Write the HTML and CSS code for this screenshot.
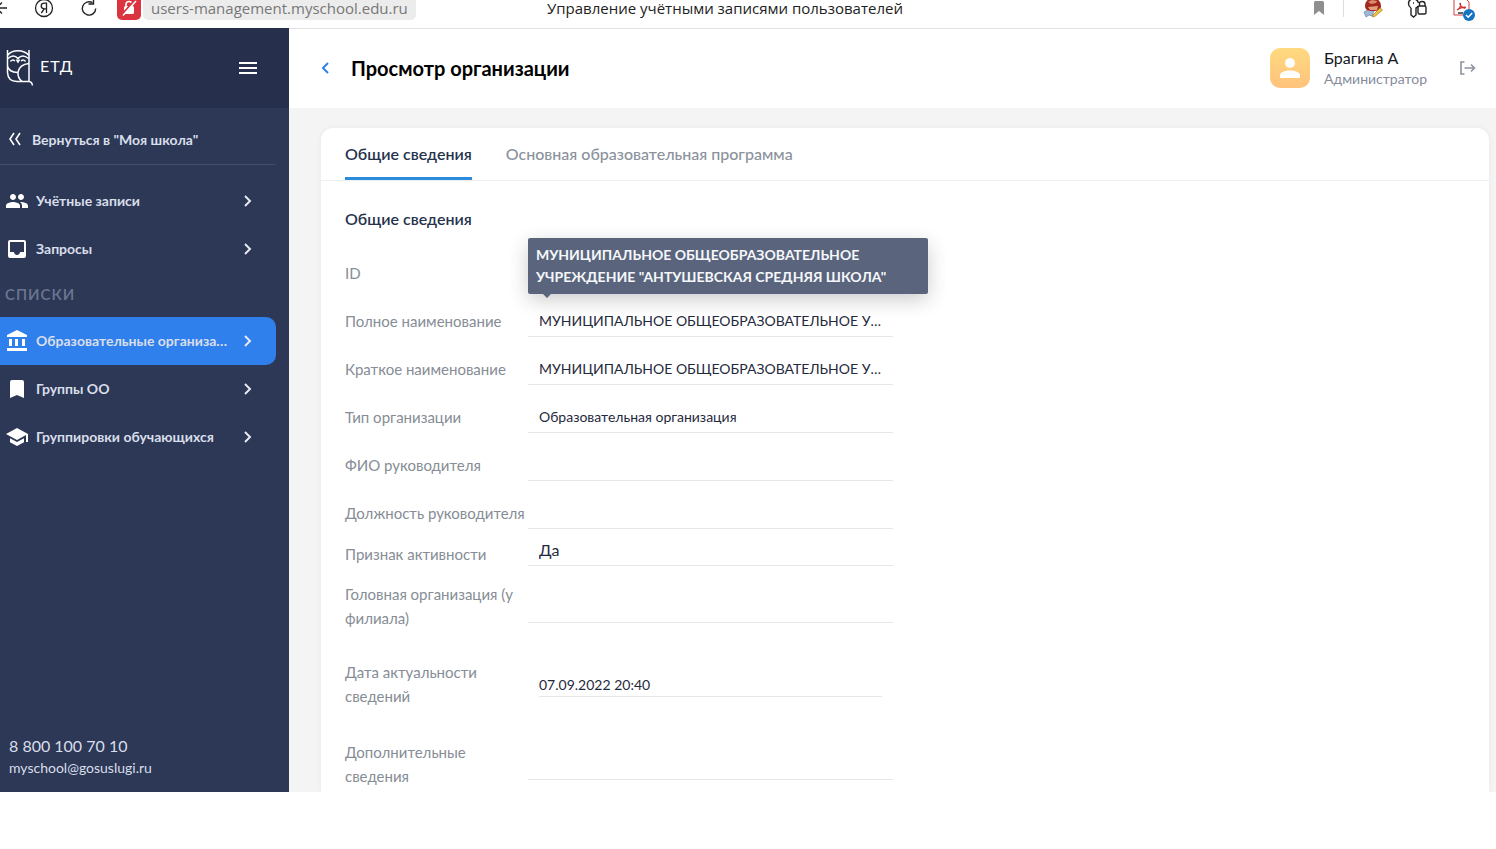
FILE: index.html
```html
<!DOCTYPE html>
<html lang="ru">
<head>
<meta charset="utf-8">
<title>Управление учётными записями пользователей</title>
<link rel="stylesheet" href="styles.css">
</head>
<body>
<div class="window">
  <div class="browser-bar">
    <div class="browser-nav">
      <button class="icon-btn nav-back" type="button" aria-label="Назад"><svg width="18" height="18" viewBox="0 0 18 18" fill="none" stroke="#222" stroke-width="1.3"><path d="M6 9h11M12 3.500L6.500 9l5.500 5.500"/></svg></button>
      <button class="icon-btn" type="button" aria-label="Яндекс"><svg width="20" height="20" viewBox="0 0 20 20" fill="none" stroke="#222" stroke-width="1.3"><circle cx="10" cy="10" r="8.500"/><path d="M12.500 15V5.200h-2c-2 0-3.300 1.100-3.300 2.800 0 1.800 1.300 2.800 3.300 2.800h2M10.300 10.800L7.300 15"/></svg></button>
      <button class="icon-btn" type="button" aria-label="Обновить"><svg width="18" height="18" viewBox="0 0 18 18" fill="none" stroke="#222" stroke-width="1.400"><path d="M15.700 9.500A6.700 6.700 0 1 1 12.500 3.700"/><path d="M13.500 0v5h-5"/></svg></button>
    </div>
    <div class="address">
      <button class="lock" type="button" aria-label="Незащищённое соединение"><svg width="24" height="24" viewBox="0 0 24 24"><path d="M9 11V8.500a3 3 0 0 1 6 0V11" fill="none" stroke="#fff" stroke-width="1.600"/><rect x="7" y="10" width="10" height="8" rx="1.500" fill="#fff"/><path d="M5 18.500L18 4" stroke="#dc3340" stroke-width="2"/><path d="M6 19.500L19 5" stroke="#fff" stroke-width="1.500"/></svg></button>
      <span class="url">users-management.myschool.edu.ru</span>
    </div>
    <div class="page-title">Управление учётными записями пользователей</div>
    <div class="extensions">
      <svg width="12" height="16" viewBox="0 0 12 16"><path d="M1 2.500Q1 1 2.500 1h7Q11 1 11 2.500V15l-5-4-5 4z" fill="#8f8f8f"/></svg>
      <span class="bar-divider"></span>
      <svg width="22" height="22" viewBox="0 0 22 22"><path d="M2 15l5-3 5 2-2 5-3-1-3 2z" fill="#9fb8d8" stroke="#6482a8" stroke-width=".7"/><path d="M3 9a8 8 0 0 1 16 0c0 4-3 5-8 5S3 13 3 9z" fill="#a3281d"/><path d="M6 5l4-2 5 1-1 2-5 1z" fill="#d98c70"/><path d="M6 10l10-1-1 4H8z" fill="#e3a080"/><path d="M11 18l7-7 2.500 2-7 6-3 1z" fill="#f0c63c" stroke="#a5782b" stroke-width=".7"/></svg>
      <svg width="22" height="22" viewBox="0 0 22 22" fill="none" stroke="#222" stroke-width="1.400"><path d="M5 11Q2.500 9.500 2.500 6.500 2.500 2 7.500 2q4 0 5 4M5 11v7l2.500 2 2.500-2v-7q1.500-.5 2-2M7 6h1"/><rect x="12" y="9" width="8" height="8" rx="1.500"/><path d="M13.500 9V6.500q0-2 2.500-2 3 0 3 2.500v2"/></svg>
      <svg width="26" height="26" viewBox="0 0 26 26"><path d="M4 3h11l4 4v13H4z" fill="#fff" stroke="#cf3f3f" stroke-width="1"/><path d="M7 15c3-2 4-4 3.500-6-.3-1.500-1.500 0 .5 2 1.500 2 4 2.500 4.500 1.700.5-1.200-5-.3-8.500 2.300z" fill="none" stroke="#cf3030" stroke-width="1.200"/><path d="M8 18h5" stroke="#333" stroke-width="1.500"/><circle cx="19" cy="20" r="6" fill="#1473c2"/><path d="M16 20l2.200 2.200 4-4.200" fill="none" stroke="#fff" stroke-width="1.600"/></svg>
    </div>
  </div>

  <div class="app">
    <aside class="sidebar">
      <div class="sidebar-head">
        <a class="logo" href="#" aria-label="ЕТД">
          <svg width="30" height="38" viewBox="0 0 30 38" fill="none" stroke="#fff" stroke-width="1.500">
            <path d="M2.500 1v22.500Q3 32.500 12 32.500H24q3 .2 3.500 4M24 1v31.500M2.500 6.500Q6 1.700 13 1.700T24 6.500"/>
            <path d="M3 9.500Q8.500 4.500 13 9.500 17.500 4.500 23.500 9.500M5.500 12.500q1.500-2.500 4.500-.5M16 12q3-2 4.500.5M11.500 10.500l1.500 2.500 1.500-2.500"/>
            <path d="M24 14.500Q14.500 15.500 13 23q-.5 6 4 9.500M2.500 17.500Q4 23 12.500 23.500"/>
          </svg>
          <span class="logo-text">ЕТД</span>
        </a>
        <button class="icon-btn burger" type="button" aria-label="Меню"><svg width="18" height="12" viewBox="0 0 18 12"><path d="M0 0h18v2H0zM0 5h18v2H0zM0 10h18v2H0z" fill="#fff"/></svg></button>
      </div>
      <a class="return-link" href="#"><svg width="14" height="14" viewBox="0 0 14 14" fill="none" stroke="#fff" stroke-width="1.600"><path d="M6 1L2 7l4 6M12 1L8 7l4 6"/></svg>Вернуться в "Моя школа"</a>
      <nav class="menu">
        <a class="menu-item" href="#"><svg class="menu-icon" width="24" height="24" viewBox="0 0 24 24"><path d="M16 11c1.660 0 2.990-1.340 2.990-3S17.660 5 16 5s-3 1.340-3 3 1.340 3 3 3zm-8 0c1.660 0 2.990-1.340 2.990-3S9.660 5 8 5 5 6.340 5 8s1.340 3 3 3zm0 2c-2.330 0-7 1.170-7 3.500V19h14v-2.500C15 14.170 10.330 13 8 13zm8 0c-.29 0-.62.020-.97.050 1.160.84 1.970 1.970 1.970 3.450V19h6v-2.500c0-2.330-4.670-3.500-7-3.500z"/></svg><span class="menu-label">Учётные записи</span><svg class="chevron" width="8" height="12" viewBox="0 0 8 12"><path d="M1 1l5 5-5 5"/></svg></a>
        <a class="menu-item" href="#"><svg class="menu-icon" width="24" height="24" viewBox="0 0 24 24"><path d="M19 3H5a2 2 0 0 0-2 2v14a2 2 0 0 0 2 2h14a2 2 0 0 0 2-2V5a2 2 0 0 0-2-2zm0 12h-4c0 1.660-1.350 3-3 3s-3-1.340-3-3H5V5h14z"/></svg><span class="menu-label">Запросы</span><svg class="chevron" width="8" height="12" viewBox="0 0 8 12"><path d="M1 1l5 5-5 5"/></svg></a>
        <div class="menu-group">СПИСКИ</div>
        <a class="menu-item active" href="#"><svg class="menu-icon" width="24" height="24" viewBox="0 0 24 24"><path d="M4 10v7h3v-7zm6 0v7h3v-7zM2 22h20v-3H2zm15-12v7h3v-7zM12 1L2 6v2h20V6z"/></svg><span class="menu-label">Образовательные организации</span><svg class="chevron" width="8" height="12" viewBox="0 0 8 12"><path d="M1 1l5 5-5 5"/></svg></a>
        <a class="menu-item" href="#"><svg class="menu-icon" width="24" height="24" viewBox="0 0 24 24"><path d="M17 3H7a2 2 0 0 0-2 2v16l7-3 7 3V5a2 2 0 0 0-2-2z"/></svg><span class="menu-label">Группы ОО</span><svg class="chevron" width="8" height="12" viewBox="0 0 8 12"><path d="M1 1l5 5-5 5"/></svg></a>
        <a class="menu-item" href="#"><svg class="menu-icon" width="24" height="24" viewBox="0 0 24 24"><path d="M5 13.180v4L12 21l7-3.820v-4L12 17zM12 3L1 9l11 6 9-4.910V17h2V9z"/></svg><span class="menu-label">Группировки обучающихся</span><svg class="chevron" width="8" height="12" viewBox="0 0 8 12"><path d="M1 1l5 5-5 5"/></svg></a>
      </nav>
      <footer class="contacts">
        <a class="phone" href="#">8 800 100 70 10</a>
        <a class="email" href="#">myschool@gosuslugi.ru</a>
      </footer>
    </aside>

    <div class="content">
      <header class="topbar">
        <button class="icon-btn back" type="button" aria-label="Назад"><svg width="8" height="12" viewBox="0 0 8 12" fill="none" stroke="#2f7fed" stroke-width="2"><path d="M7 1L2 6l5 5"/></svg></button>
        <h1 class="title">Просмотр организации</h1>
        <div class="avatar"><svg width="20" height="20" viewBox="0 0 20 20" fill="#fff"><circle cx="10" cy="5" r="5"/><path d="M0 20v-2.500C0 14 5 12.500 10 12.500S20 14 20 17.500V20z"/></svg></div>
        <div class="user"><span class="user-name">Брагина А</span><span class="user-role">Администратор</span></div>
        <button class="icon-btn logout" type="button" aria-label="Выйти"><svg width="16" height="14" viewBox="0 0 16 14" fill="none" stroke="#8b929f" stroke-width="1.600"><path d="M4.500 1H1v12h3.500M4.500 7h10M11 3.500L14.500 7 11 10.500"/></svg></button>
      </header>
      <main class="card">
        <div class="tabs" role="tablist">
          <button class="tab selected" type="button" role="tab" aria-selected="true">Общие сведения</button>
          <button class="tab" type="button" role="tab" aria-selected="false">Основная образовательная программа</button>
        </div>
        <form class="form">
          <h2 class="section">Общие сведения</h2>
          <div class="row"><span class="label">ID</span></div>
          <div class="row"><label class="label" for="full">Полное наименование</label><div class="field"><input id="full" class="value" readonly value="МУНИЦИПАЛЬНОЕ ОБЩЕОБРАЗОВАТЕЛЬНОЕ УЧРЕЖДЕНИЕ"><div class="tooltip" role="tooltip">МУНИЦИПАЛЬНОЕ ОБЩЕОБРАЗОВАТЕЛЬНОЕ УЧРЕЖДЕНИЕ "АНТУШЕВСКАЯ СРЕДНЯЯ ШКОЛА"</div></div></div>
          <div class="row"><label class="label" for="short">Краткое наименование</label><div class="field"><input id="short" class="value" readonly value="МУНИЦИПАЛЬНОЕ ОБЩЕОБРАЗОВАТЕЛЬНОЕ УЧРЕЖДЕНИЕ"></div></div>
          <div class="row"><label class="label" for="type">Тип организации</label><div class="field"><input id="type" class="value" readonly value="Образовательная организация"></div></div>
          <div class="row"><label class="label" for="head">ФИО руководителя</label><div class="field"><input id="head" class="value" readonly></div></div>
          <div class="row"><label class="label" for="post">Должность руководителя</label><div class="field"><input id="post" class="value" readonly></div></div>
          <div class="row row-active"><label class="label" for="active">Признак активности</label><div class="field"><input id="active" class="value" readonly value="Да"></div></div>
          <div class="row row-parent"><label class="label" for="parent">Головная организация (у филиала)</label><div class="field"><input id="parent" class="value" readonly></div></div>
          <div class="row row-date"><label class="label" for="date">Дата актуальности сведений</label><div class="field"><input id="date" class="value" readonly value="07.09.2022 20:40"></div></div>
          <div class="row row-extra"><label class="label" for="extra">Дополнительные сведения</label><div class="field"><input id="extra" class="value" readonly></div></div>
        </form>
      </main>
    </div>
  </div>
</div>
</body>
</html>
```
FILE: styles.css
```css
* { box-sizing: border-box; }
body { margin: 0; background: #fff; font-family: Lato, "Noto Sans", sans-serif; color: #1f2a3d; }
a { color: inherit; text-decoration: none; }
button { border: 0; background: none; padding: 0; font: inherit; cursor: pointer; }
svg { display: block; flex: none; }
.icon-btn { display: flex; align-items: center; justify-content: center; flex: none; }

.window { display: flex; flex-direction: column; height: calc(100vh - 57px); overflow: hidden; }
.browser-bar { position: relative; flex: none; display: flex; align-items: center; height: 29px; padding: 0 20px 12px 0; border-bottom: 1px solid #e2e2e2; font-family: "Open Sans", "Noto Sans", sans-serif; font-size: 15px; }
.browser-nav { display: flex; align-items: center; gap: 26px; }
.nav-back { margin-left: -10px; }
.address { display: flex; align-items: flex-end; gap: 2px; margin-left: 19px; }
.lock { width: 24px; height: 24px; border-radius: 5px; background: #dc3340; }
.url { height: 20px; padding: 0 8px; border-radius: 0 0 5px 5px; background: #ececec; color: #777; line-height: 16px; }
.page-title { position: absolute; left: 547px; top: 0; line-height: 16px; color: #222; white-space: nowrap; }
.extensions { display: flex; align-items: center; gap: 22px; margin-left: auto; }
.bar-divider { width: 1px; height: 18px; margin: 0 -4px; background: #ddd; }

.app { flex: 1; min-height: 0; display: flex; margin-top: -1px; position: relative; }
.sidebar { flex: none; width: 289px; display: flex; flex-direction: column; background: #2c3856; color: #d9deea; }
.sidebar-head { display: flex; align-items: center; justify-content: space-between; height: 80px; padding: 0 32px 0 5px; background: #26304d; }
.logo { display: flex; align-items: center; gap: 5px; color: #fff; }
.logo-text { font-size: 16px; letter-spacing: 1px; line-height: 20px; padding-bottom: 4px; }
.return-link { display: flex; align-items: center; gap: 10px; height: 57px; margin-right: 13px; padding: 6px 0 0 8px; border-bottom: 1px solid #414d6b; font-size: 14px; font-weight: 700; }
.menu { display: flex; flex-direction: column; padding-top: 12px; }
.menu-item { display: flex; align-items: center; gap: 7px; height: 48px; margin-right: 13px; padding: 0 24px 0 5px; border-radius: 0 10px 10px 0; font-size: 14px; font-weight: 700; }
.menu-item.active { background: #2f80ed; }
.menu-icon { fill: #fff; }
.menu-label { flex: 1; min-width: 0; margin-right: 6px; overflow: hidden; text-overflow: ellipsis; white-space: nowrap; line-height: 20px; padding-bottom: 1px; }
.chevron { fill: none; stroke: #e6eaf3; stroke-width: 2; }
.menu-group { height: 44px; padding-left: 5px; line-height: 42px; font-size: 15px; font-weight: 600; letter-spacing: 1px; color: #6c7690; }
.contacts { display: flex; flex-direction: column; margin-top: auto; padding: 0 9px 13px; line-height: 22px; }
.phone { font-size: 16px; }
.email { font-size: 14px; }

.content { flex: 1; min-width: 0; display: flex; flex-direction: column; background: #f4f4f4; }
.topbar { flex: none; display: flex; align-items: center; height: 80px; padding: 0 20px 0 32px; background: #fff; box-shadow: inset 0 1px #e2e2e2; }
.title { margin: 0 auto 0 22px; font-size: 20px; font-weight: 700; color: #000; }
.avatar { display: flex; align-items: center; justify-content: center; width: 40px; height: 40px; border-radius: 10px; background: linear-gradient(#ffda80, #ffc27c); }
.user { display: flex; flex-direction: column; min-width: 105px; margin-left: 14px; line-height: 21px; }
.user-name { font-size: 16px; color: #16181d; }
.user-role { font-size: 14px; color: #858b9b; }
.logout { margin-left: 31px; }

.card { flex: 1; min-height: 0; margin: 20px 7px 0 32px; border-radius: 12px 12px 0 0; background: #fff; box-shadow: 0 0 6px rgba(0, 0, 0, .05); }
.tabs { display: flex; gap: 34px; height: 53px; padding: 0 24px; border-bottom: 1px solid #eef1f4; }
.tab { height: 52px; padding-top: 2px; border-bottom: 3px solid transparent; font-size: 16px; font-weight: 500; color: #8a929c; }
.tab.selected { border-color: #2d8bdb; font-weight: 600; color: #26334d; }
.form { padding: 27px 24px 0; }
.section { margin: 0 0 19px; line-height: 22px; font-size: 16px; font-weight: 600; color: #26334d; }
.row { display: flex; align-items: center; width: 548px; height: 48px; }
.label { flex: none; width: 183px; line-height: 24px; font-size: 15px; color: #868d96; }
.field { position: relative; flex: 1; height: 32px; border-bottom: 1px solid #e4e6e8; }
.value { display: block; width: 100%; height: 30px; padding: 0 11px; border: 0; outline: 0; background: none; font: 14px Lato, "Noto Sans", sans-serif; color: #1f2a3d; text-overflow: ellipsis; }
.tooltip { position: absolute; left: 0; bottom: 42px; width: 400px; padding: 6px 8px; border-radius: 2px; background: #5a657d; box-shadow: 0 6px 20px rgba(0, 0, 0, .2); line-height: 22px; font-size: 14px; font-weight: 700; color: #f5f7fa; }
.tooltip::after { content: ""; position: absolute; left: 15px; top: 100%; border: 4px solid transparent; border-top-color: #5a657d; border-bottom: 0; }
.row-active { height: 33px; }
.row-active .field { height: 26px; margin-bottom: -2px; margin-top: -4px; }
.row-active .value { height: 20px; font-size: 16px; }
.row-parent { height: 64px; margin-top: 4px; }
.row-parent .field { height: 34px; }
.row-date { height: 80px; margin-top: 6px; }
.row-date .field { height: 26px; margin: 0 11px; }
.row-date .value { height: 26px; padding: 0; }
.row-extra { height: 80px; }
```
